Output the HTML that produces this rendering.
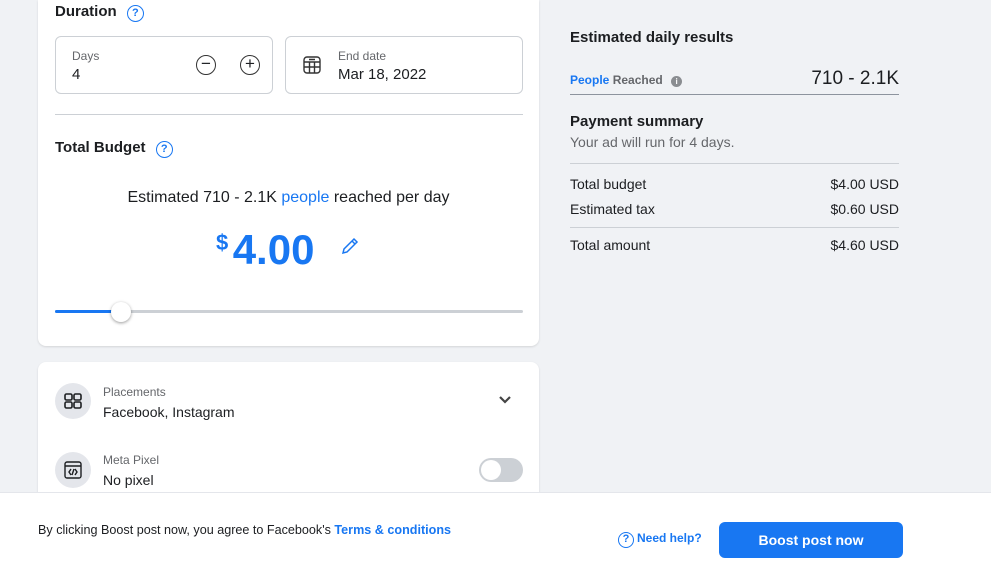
<!DOCTYPE html>
<html><head><style>
*{box-sizing:border-box;margin:0;padding:0}
body{width:991px;height:568px;overflow:hidden;background:#f0f2f5;font-family:"Liberation Sans",sans-serif;color:#1c1e21;position:relative}
.card{position:absolute;left:38px;width:501px;background:#fff;border-radius:0 0 8px 8px;box-shadow:0 1px 2px rgba(0,0,0,.12)}
.abs{position:absolute}
.h{font-weight:bold;font-size:15px}
.q{display:inline-block;width:17px;height:17px;border:1.5px solid #1877f2;border-radius:50%;color:#1877f2;font-size:11px;text-align:center;line-height:14px;font-weight:bold}
.box{position:absolute;border:1px solid #ccd0d5;border-radius:6px;height:58px;top:36px}
.lbl{font-size:12px;color:#65676b}
.val{font-size:15px}
.circ{position:absolute;width:20px;height:20px;border:1.5px solid #333;border-radius:50%;text-align:center;line-height:16px;font-size:17px}
.ic{position:absolute;left:17px;width:36px;height:36px;border-radius:50%;background:#e4e6eb}
.row{font-size:14px;position:absolute;left:570px;width:329px}
.row span{float:right}
</style></head><body>
<div class="card" style="top:0;height:346px">
 <div class="abs h" style="left:17px;top:3px">Duration <span class="q" style="margin-left:6px">?</span></div>
 <div class="box" style="left:17px;width:218px">
  <div class="abs lbl" style="left:16px;top:12px">Days</div>
  <div class="abs val" style="left:16px;top:29px">4</div>
  <div class="circ" style="left:140px;top:18px">−</div>
  <div class="circ" style="left:184px;top:18px">+</div>
 </div>
 <div class="box" style="left:247px;width:238px">
  <svg class="abs" style="left:16px;top:18px" width="20" height="20" viewBox="0 0 20 20" fill="none" stroke="#333" stroke-width="1.4"><rect x="2" y="2" width="16" height="16" rx="3"/><path d="M2 7h16M2 12h16M7.5 7v11M12.5 7v11M7 4.5h6"/></svg>
  <div class="abs lbl" style="left:52px;top:12px">End date</div>
  <div class="abs val" style="left:52px;top:29px">Mar 18, 2022</div>
 </div>
 <div class="abs" style="left:17px;top:114px;width:468px;border-top:1px solid #ccd0d5"></div>
 <div class="abs h" style="left:17px;top:139px">Total Budget <span class="q" style="margin-left:6px">?</span></div>
 <div class="abs" style="left:0;width:501px;top:189px;text-align:center;font-size:16px">Estimated 710 - 2.1K <span style="color:#1877f2">people</span> reached per day</div>
 <div class="abs" style="left:178px;top:226px;color:#1877f2;font-weight:bold"><span style="font-size:22px;vertical-align:top;position:relative;top:4px">$</span> <span style="font-size:42px">4.00</span></div>
 <svg class="abs" style="left:302px;top:236px" width="20" height="20" viewBox="0 0 20 20" fill="none" stroke="#1877f2" stroke-width="1.5"><path d="M3 17l1-4L14 3l3 3L7 16z M12 5l3 3"/></svg>
 <div class="abs" style="left:17px;top:310px;width:468px;height:3px;background:#ccd0d5;border-radius:2px"></div>
 <div class="abs" style="left:17px;top:310px;width:66px;height:3px;background:#1877f2;border-radius:2px"></div>
 <div class="abs" style="left:73px;top:302px;width:20px;height:20px;border-radius:50%;background:#fff;box-shadow:0 1px 3px rgba(0,0,0,.4)"></div>
</div>
<div class="card" style="top:362px;height:140px;border-radius:8px 8px 0 0">
 <div class="ic" style="top:21px"><svg style="margin:8px" width="20" height="20" viewBox="0 0 20 20" fill="none" stroke="#1c1e21" stroke-width="1.6"><rect x="2" y="3" width="7" height="6" rx="1.5"/><rect x="11" y="3" width="7" height="6" rx="1.5"/><rect x="2" y="11" width="7" height="6" rx="1.5"/><rect x="11" y="11" width="7" height="6" rx="1.5"/></svg></div>
 <div class="abs lbl" style="left:65px;top:23px">Placements</div>
 <div class="abs" style="left:65px;top:42px;font-size:14px">Facebook, Instagram</div>
 <svg class="abs" style="left:459px;top:32px" width="16" height="12" viewBox="0 0 16 12"><path d="M3 3l5 5 5-5" stroke="#444" stroke-width="2.2" fill="none"/></svg>
 <div class="ic" style="top:90px"><svg style="margin:8px" width="20" height="20" viewBox="0 0 20 20" fill="none" stroke="#1c1e21" stroke-width="1.4"><rect x="2" y="2" width="16" height="16" rx="2"/><path d="M2 6h16M8 9l-2 3 2 3M12 9l2 3-2 3M11 9l-2 6"/></svg></div>
 <div class="abs lbl" style="left:65px;top:91px">Meta Pixel</div>
 <div class="abs" style="left:65px;top:110px;font-size:14px">No pixel</div>
 <div class="abs" style="left:441px;top:96px;width:44px;height:24px;border-radius:12px;background:#ccd0d5"><div style="position:absolute;left:2px;top:2px;width:20px;height:20px;border-radius:50%;background:#fff"></div></div>
</div>
<div class="abs" style="left:570px;top:29px;font-weight:bold;font-size:15px">Estimated daily results</div>
<div class="abs" style="left:570px;top:73px;font-size:12px;font-weight:bold;color:#1877f2">People <span style="color:#65676b">Reached</span> <span style="display:inline-block;width:11px;height:11px;border-radius:50%;background:#8a8d91;color:#fff;font-size:8px;text-align:center;line-height:11px;margin-left:5px">i</span></div>
<div class="abs" style="left:700px;width:199px;text-align:right;top:68px;font-size:19px">710 - 2.1K</div>
<div class="abs" style="left:570px;top:94px;width:329px;border-top:1px solid #8d949e"></div>
<div class="abs" style="left:570px;top:113px;font-weight:bold;font-size:15px">Payment summary</div>
<div class="abs" style="left:570px;top:134px;font-size:14px;color:#65676b">Your ad will run for 4 days.</div>
<div class="abs" style="left:570px;top:163px;width:329px;border-top:1px solid #ccd0d5"></div>
<div class="row" style="top:176px">Total budget<span>$4.00 USD</span></div>
<div class="row" style="top:201px">Estimated tax<span>$0.60 USD</span></div>
<div class="abs" style="left:570px;top:227px;width:329px;border-top:1px solid #ccd0d5"></div>
<div class="row" style="top:237px">Total amount<span>$4.60 USD</span></div>
<div class="abs" style="left:0;top:492px;width:991px;height:76px;background:#fff;border-top:1px solid #e4e6eb">
 <div class="abs" style="left:38px;top:30px;font-size:12.6px">By clicking Boost post now, you agree to Facebook's <span style="color:#1877f2;font-weight:bold">Terms &amp; conditions</span></div>
 <div class="abs" style="left:618px;top:38px;font-size:12px;font-weight:bold;color:#1877f2"><span class="q" style="width:16px;height:16px;line-height:13px;margin-right:3px">?</span>Need help?</div>
 <div class="abs" style="left:719px;top:29px;width:184px;height:36px;background:#1877f2;border-radius:6px;color:#fff;font-weight:bold;font-size:14px;text-align:center;line-height:36px">Boost post now</div>
</div>
</body></html>
